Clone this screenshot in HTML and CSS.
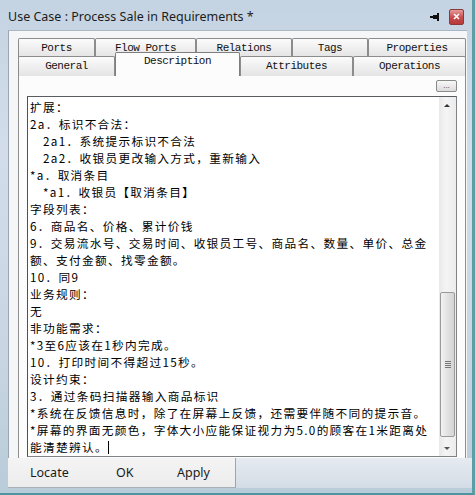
FILE: index.html
```html
<!DOCTYPE html>
<html lang="zh-CN">
<head>
    <meta charset="UTF-8">
    <title>Use Case : Process Sale in Requirements *</title>
    <link rel="stylesheet" href="styles.css">
</head>
<body>

<div class="window">
    <div class="titlebar">
        <span class="title">Use Case : Process Sale in Requirements *</span>
        <svg class="pin" width="10" height="8" viewBox="0 0 10 8">
            <rect x="0" y="3" width="3" height="2" fill="#111"/>
            <rect x="3" y="2" width="4" height="4" fill="#111"/>
            <rect x="7" y="0" width="2" height="8" fill="#111"/>
        </svg>
        <span class="close">
            <svg width="13" height="13" viewBox="0 0 13 13">
                <path d="M4 4 L9 9 M9 4 L4 9" stroke="#fff" stroke-width="1.6"/>
            </svg>
        </span>
    </div>

    <div class="client">
        <div class="tab-row row-back">
            <div class="tab">Ports</div>
            <div class="tab">Flow Ports</div>
            <div class="tab">Relations</div>
            <div class="tab">Tags</div>
            <div class="tab">Properties</div>
        </div>
        <div class="tab-row row-front">
            <div class="tab">General</div>
            <div class="tab active">Description</div>
            <div class="tab">Attributes</div>
            <div class="tab">Operations</div>
        </div>

        <div class="panel">
            <button class="more">...</button>
            <div class="editor">
                <div class="text">
                    <div>扩展：</div>
                    <div>2a．标识不合法：</div>
                    <div class="indent">2a1．系统提示标识不合法</div>
                    <div class="indent">2a2．收银员更改输入方式，重新输入</div>
                    <div>*a．取消条目</div>
                    <div class="indent">*a1．收银员【取消条目】</div>
                    <div>字段列表：</div>
                    <div>6．商品名、价格、累计价钱</div>
                    <div>9．交易流水号、交易时间、收银员工号、商品名、数量、单价、总金</div>
                    <div>额、支付金额、找零金额。</div>
                    <div>10．同9</div>
                    <div>业务规则：</div>
                    <div>无</div>
                    <div>非功能需求：</div>
                    <div>*3至6应该在1秒内完成。</div>
                    <div>10．打印时间不得超过15秒。</div>
                    <div>设计约束：</div>
                    <div>3．通过条码扫描器输入商品标识</div>
                    <div>*系统在反馈信息时，除了在屏幕上反馈，还需要伴随不同的提示音。</div>
                    <div>*屏幕的界面无颜色，字体大小应能保证视力为5.0的顾客在1米距离处</div>
                    <div>能清楚辨认。<span class="caret"></span></div>
                </div>
                <div class="scrollbar">
                    <div class="arrow up"></div>
                    <div class="track">
                        <div class="thumb"><span class="grip"></span></div>
                    </div>
                    <div class="arrow down"></div>
                </div>
            </div>
        </div>
    </div>

    <div class="bottombar">
        <div class="buttons">
            <button class="flat">Locate</button>
            <button class="flat">OK</button>
            <button class="flat">Apply</button>
        </div>
    </div>
</div>

</body>
</html>
```

FILE: styles.css
```css
body {
    margin: 0;
    font-family: "Noto Sans", "Noto Sans CJK SC", sans-serif;
}
.window {
    width: 475px;
    height: 495px;
    display: flex;
    flex-direction: column;
    background: linear-gradient(to bottom, #c4d3e2 0%, #d2dde9 30%, #c9d6e2 70%, #b9ccd9 100%);
    box-sizing: border-box;
    border-right: 3px solid #5c9ea6;
    border-bottom: 2px solid #4f939e;
    overflow: hidden;
}
.titlebar {
    height: 30px;
    flex-shrink: 0;
    display: flex;
    align-items: center;
    padding: 3px 0 0 8px;
    box-sizing: border-box;
}
.title {
    font-size: 12.5px;
    color: #1c1c1c;
    flex: 1;
}
.pin {
    margin-right: 9px;
}
.close {
    width: 13px;
    height: 14px;
    margin-right: 8px;
    border: 1px solid #8a3a3a;
    border-radius: 2px;
    background: linear-gradient(to bottom, #e69a9a, #c74a4a 55%, #b83a3a);
    display: flex;
    align-items: center;
    justify-content: center;
}
.client {
    height: 428px;
    flex-shrink: 0;
    margin: 0 5px 0 8px;
    padding: 7px 1px 0 9px;
    box-sizing: border-box;
    border-left: 1px solid #9ba6b2;
    border-top: 1px solid #aab6c2;
    background: #f5f6f7;
    display: flex;
    flex-direction: column;
}
.tab-row {
    display: grid;
    font-family: "Liberation Mono", monospace;
    font-size: 11px;
    letter-spacing: -0.5px;
    color: #111;
}
.row-back {
    grid-template-columns: 77px 101px 96px 76px 98px;
    height: 18px;
}
.row-front {
    grid-template-columns: 97px 125px 113px 113px;
    height: 19px;
    position: relative;
    z-index: 1;
}
.tab {
    border: 1px solid #8c8c8c;
    border-bottom: none;
    border-radius: 2px 2px 0 0;
    background: linear-gradient(to bottom, #fbfbfb, #e4e4e4);
    text-align: center;
    line-height: 18px;
    box-sizing: border-box;
}
.row-back .tab {
    border-bottom: 1px solid #9a9a9a;
}
.tab.active {
    background: #fcfcfc;
    margin-top: -4px;
    height: 24px;
    line-height: 17px;
    border-color: #7e7e7e;
}
.panel {
    flex: 1;
    border: 1px solid #8e8e8e;
    border-bottom: none;
    background: #fcfcfc;
    padding: 4px 8px 0 8px;
    display: flex;
    flex-direction: column;
}
.more {
    align-self: flex-end;
    width: 21px;
    height: 12px;
    padding: 0;
    margin-bottom: 4px;
    border: 1px solid #8a8a8a;
    border-radius: 2px;
    background: linear-gradient(to bottom, #f8f8f8, #dcdcdc);
    font-size: 8px;
    line-height: 6px;
    color: #333;
}
.editor {
    height: 361px;
    flex-shrink: 0;
    display: flex;
    border: 1px solid #7f8386;
    border-top-color: #5a5d60;
    border-left-color: #4f5254;
    background: #fff;
    box-sizing: border-box;
}
.text {
    flex: 1;
    padding: 1px 0 0 2px;
    font-family: "Noto Sans CJK SC", sans-serif;
    font-size: 11.7px;
    letter-spacing: 1.3px;
    line-height: 17px;
    color: #000;
    white-space: nowrap;
    overflow: hidden;
}
.indent {
    padding-left: 13px;
}
.caret {
    display: inline-block;
    width: 1px;
    height: 13px;
    background: #000;
    vertical-align: -2px;
}
.scrollbar {
    width: 17px;
    display: flex;
    flex-direction: column;
    background: linear-gradient(to right, #e9e9e9, #f4f4f4 40%, #ececec);
}
.arrow {
    height: 17px;
    position: relative;
}
.arrow.up::after,
.arrow.down::after {
    content: "";
    position: absolute;
    left: 5px;
    border-left: 3px solid transparent;
    border-right: 3px solid transparent;
}
.arrow.up::after {
    top: 7px;
    border-bottom: 3px solid #333;
}
.arrow.down::after {
    top: 8px;
    border-top: 3px solid #555;
}
.track {
    flex: 1;
    display: flex;
    flex-direction: column;
    justify-content: flex-end;
    padding-bottom: 2px;
}
.thumb {
    height: 145px;
    margin: 0 1px;
    border: 1px solid #9a9a9a;
    border-radius: 2px;
    background: linear-gradient(to right, #f3f3f3, #e2e2e2 50%, #d4d4d4);
    display: flex;
    align-items: center;
    justify-content: center;
    box-sizing: border-box;
}
.grip {
    width: 6px;
    height: 7px;
    background: repeating-linear-gradient(to bottom, #777 0, #777 1px, transparent 1px, transparent 2px);
}
.bottombar {
    height: 30px;
    flex-shrink: 0;
    margin-left: 8px;
    display: flex;
    background: linear-gradient(to bottom, #e6ebf1, #d3dce5);
}
.buttons {
    width: 228px;
    display: grid;
    grid-template-columns: 86px 61px 1fr;
    padding-left: 22px;
    box-sizing: border-box;
    background: linear-gradient(to bottom, #f4f4f4, #ececec);
    border-right: 1px solid #9da4ab;
    border-bottom: 1px solid #a9b0b7;
}
.flat {
    border: none;
    background: none;
    padding: 0;
    text-align: left;
    font-family: "Noto Sans", sans-serif;
    font-size: 12.5px;
    color: #1a1a1a;
}
```
